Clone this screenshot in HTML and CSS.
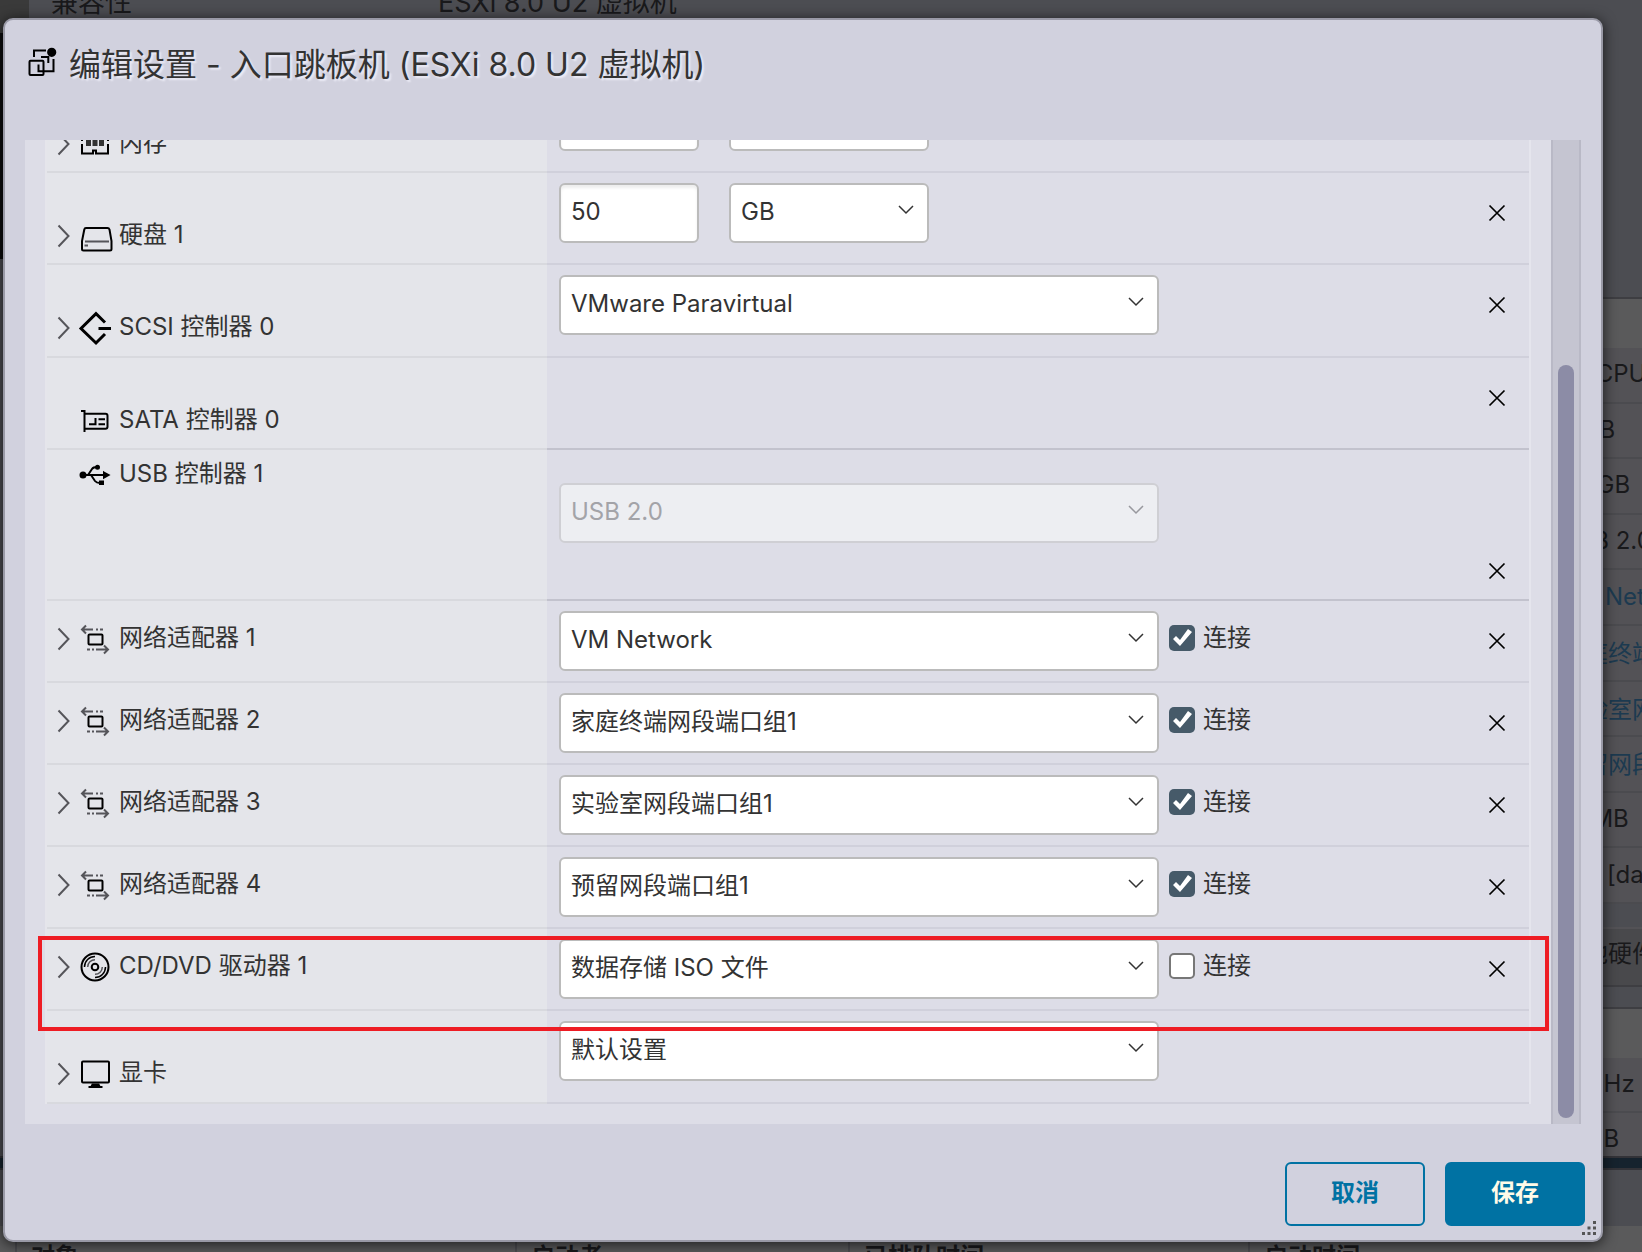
FILE: index.html
```html
<!DOCTYPE html>
<html lang="zh-CN">
<head>
    <meta charset="UTF-8">
    <meta name="viewport" content="width=device-width, initial-scale=1.0">
    <title>编辑设置 - 入口跳板机</title>
    <link rel="stylesheet" href="styles.css">
</head>
<body>
    <!-- Icon sprite -->
    <svg class="sprite" aria-hidden="true">
        <symbol id="i-vm" viewBox="0 0 32 32">
            <rect x="3.5" y="14.7" width="14" height="14.3" rx="1"/>
            <path d="M8 11V4.5h12M15 11h7.3v6M27.5 13v12.3h-15v-6.8"/>
            <circle class="solid" cx="25.7" cy="6.3" r="3.6"/>
        </symbol>
        <symbol id="i-caret" viewBox="0 0 14 24"><path d="M1.5 1.5l10 10.500l-10 10.500"/></symbol>
        <symbol id="i-down" viewBox="0 0 16 10"><path d="M1 1l7 7 7-7"/></symbol>
        <symbol id="i-close" viewBox="0 0 16 16"><path d="M.5.5l15 15M15.500.5l-15 15"/></symbol>
        <symbol id="i-memory" viewBox="0 0 32 32">
            <path d="M3 13V8h26v5M3 16v9.500h11v-3h3v3h12V16"/>
            <path class="chips" d="M9.500 11v7M16 11v7M22.500 11v7"/>
        </symbol>
        <symbol id="i-disk" viewBox="0 0 32 32">
            <path d="M7 8h21.500q1.500 0 2 1.500L32.500 21v8q0 1.500-1.500 1.500H4.500Q3 30.500 3 29v-8L5.300 9.500Q5.600 8 7 8z"/>
            <path class="dim" d="M6 21.500h24M5.500 25.500H9"/>
        </symbol>
        <symbol id="i-scsi" viewBox="0 0 32 32"><path class="thick" d="M26 10.500L17 1.700 2 16.500 17 31l9-9M19.500 16.500H32"/></symbol>
        <symbol id="i-sata" viewBox="0 0 32 32"><path d="M2 6h3.500v21M5.500 8.700h21q2 0 2 2v11q0 2-2 2h-21M10 19.300h6.500V13M19.500 14.200H26M19.500 19.300H26"/></symbol>
        <symbol id="i-usb" viewBox="0 0 32 32">
            <path d="M3 16h23M9 16l4-6q1.300-2 5-2M12 16l4 6q1.500 2 5 2"/>
            <path class="solid" d="M25 13.500l4.500 2.500-4.500 2.500z"/>
            <circle class="solid" cx="4" cy="16" r="2.500"/>
            <circle class="solid" cx="18.500" cy="8.300" r="1.500"/>
            <rect class="solid" x="21" y="22.500" width="3" height="2.500"/>
        </symbol>
        <symbol id="i-net" viewBox="0 0 32 32">
            <path class="dim" d="M3 6.500h11M7 2.500l-4 4 4 4M17 6.500h2M21 6.500h3M8 26.500h3M13 26.500h2M17 26.500h12M25 22.500l4 4-4 4"/>
            <rect x="9.500" y="11.500" width="14" height="10" rx="1"/>
        </symbol>
        <symbol id="i-cd" viewBox="0 0 32 32">
            <circle cx="16" cy="16" r="13.500"/>
            <circle cx="16" cy="16" r="3.300"/>
            <path class="thin" d="M5.500 16A10.500 10.500 0 0 1 16 5.500M26.500 16A10.500 10.500 0 0 1 16 26.500"/>
            <path class="thin dim" d="M8.700 16A7.300 7.300 0 0 1 16 8.700M23.300 16A7.300 7.300 0 0 1 16 23.300"/>
        </symbol>
        <symbol id="i-screen" viewBox="0 0 32 32">
            <rect x="3" y="3.500" width="27" height="21" rx="1"/>
            <path class="solid" d="M13.500 26.500h6l1 2h-8zM9.500 29h14"/>
        </symbol>
    </svg>

    <!-- Page behind the dialog -->
    <div class="host" aria-hidden="true">
        <div class="host-info">
            <span class="host-key">兼容性</span>
            <span>ESXi 8.0 U2 虚拟机</span>
        </div>
        <div class="host-main">
            <div class="host-side">
                <div class="side-head"></div>
                <ul class="side-list">
                    <li>4 vCPU</li>
                    <li>8 GB</li>
                    <li>50 GB</li>
                    <li>USB 2.0</li>
                    <li><a href="#net1">VM Network</a></li>
                    <li><a href="#net2">家庭终端网段端口组1</a></li>
                    <li><a href="#net3">实验室网段端口组1</a></li>
                    <li><a href="#net4">预留网段端口组1</a></li>
                    <li>16 MB</li>
                    <li>ISO [datastore1]</li>
                </ul>
                <div class="side-other">其他硬件</div>
                <div class="side-head side-gap"></div>
                <ul class="side-list side-usage">
                    <li>0 MHz</li>
                    <li>0 MB</li>
                </ul>
            </div>
        </div>
        <div class="host-splitter"></div>
        <div class="host-toolbar"></div>
        <div class="host-tasks">
            <span>对象</span>
            <span>启动者</span>
            <span>已排队时间</span>
            <span>启动时间</span>
        </div>
    </div>

    <div class="overlay">
        <form class="dialog" role="dialog" aria-labelledby="dialog-title">
            <header class="dialog-header">
                <svg class="icon"><use href="#i-vm"/></svg>
                <h1 id="dialog-title">编辑设置 - 入口跳板机 (ESXi 8.0 U2 虚拟机)</h1>
            </header>

            <div class="dialog-body">
                <div class="scroll-content">
                    <div class="hardware">
                        <div class="row tall">
                            <div class="name">
                                <svg class="caret"><use href="#i-caret"/></svg>
                                <svg class="icon"><use href="#i-memory"/></svg>
                                <label for="mem">内存</label>
                            </div>
                            <div class="value">
                                <input class="field size" id="mem" type="text" value="4">
                                <span class="select unit">
                                    <select class="field" aria-label="内存单位"><option>GB</option></select>
                                    <svg class="down"><use href="#i-down"/></svg>
                                </span>
                            </div>
                        </div>

                        <div class="row tall">
                            <div class="name">
                                <svg class="caret"><use href="#i-caret"/></svg>
                                <svg class="icon"><use href="#i-disk"/></svg>
                                <label for="disk">硬盘 1</label>
                            </div>
                            <div class="value">
                                <input class="field size" id="disk" type="text" value="50">
                                <span class="select unit">
                                    <select class="field" aria-label="硬盘单位"><option>GB</option></select>
                                    <svg class="down"><use href="#i-down"/></svg>
                                </span>
                                <button class="remove" type="button" aria-label="移除"><svg><use href="#i-close"/></svg></button>
                            </div>
                        </div>

                        <div class="row tall taller">
                            <div class="name">
                                <svg class="caret"><use href="#i-caret"/></svg>
                                <svg class="icon"><use href="#i-scsi"/></svg>
                                <label for="scsi">SCSI 控制器 0</label>
                            </div>
                            <div class="value">
                                <span class="select">
                                    <select class="field" id="scsi"><option>VMware Paravirtual</option></select>
                                    <svg class="down"><use href="#i-down"/></svg>
                                </span>
                                <button class="remove" type="button" aria-label="移除"><svg><use href="#i-close"/></svg></button>
                            </div>
                        </div>

                        <div class="row tall strong">
                            <div class="name">
                                <span class="caret"></span>
                                <svg class="icon"><use href="#i-sata"/></svg>
                                <span>SATA 控制器 0</span>
                            </div>
                            <div class="value">
                                <button class="remove" type="button" aria-label="移除"><svg><use href="#i-close"/></svg></button>
                            </div>
                        </div>

                        <div class="row usb strong">
                            <div class="name">
                                <span class="caret"></span>
                                <svg class="icon"><use href="#i-usb"/></svg>
                                <label for="usb">USB 控制器 1</label>
                            </div>
                            <div class="value">
                                <span class="select">
                                    <select class="field" id="usb" disabled><option>USB 2.0</option></select>
                                    <svg class="down"><use href="#i-down"/></svg>
                                </span>
                                <button class="remove" type="button" aria-label="移除"><svg><use href="#i-close"/></svg></button>
                            </div>
                        </div>

                        <div class="row">
                            <div class="name">
                                <svg class="caret"><use href="#i-caret"/></svg>
                                <svg class="icon"><use href="#i-net"/></svg>
                                <label for="net1">网络适配器 1</label>
                            </div>
                            <div class="value">
                                <span class="select">
                                    <select class="field" id="net1"><option>VM Network</option></select>
                                    <svg class="down"><use href="#i-down"/></svg>
                                </span>
                                <label class="connect"><input type="checkbox" checked>连接</label>
                                <button class="remove" type="button" aria-label="移除"><svg><use href="#i-close"/></svg></button>
                            </div>
                        </div>

                        <div class="row">
                            <div class="name">
                                <svg class="caret"><use href="#i-caret"/></svg>
                                <svg class="icon"><use href="#i-net"/></svg>
                                <label for="net2">网络适配器 2</label>
                            </div>
                            <div class="value">
                                <span class="select">
                                    <select class="field" id="net2"><option>家庭终端网段端口组1</option></select>
                                    <svg class="down"><use href="#i-down"/></svg>
                                </span>
                                <label class="connect"><input type="checkbox" checked>连接</label>
                                <button class="remove" type="button" aria-label="移除"><svg><use href="#i-close"/></svg></button>
                            </div>
                        </div>

                        <div class="row">
                            <div class="name">
                                <svg class="caret"><use href="#i-caret"/></svg>
                                <svg class="icon"><use href="#i-net"/></svg>
                                <label for="net3">网络适配器 3</label>
                            </div>
                            <div class="value">
                                <span class="select">
                                    <select class="field" id="net3"><option>实验室网段端口组1</option></select>
                                    <svg class="down"><use href="#i-down"/></svg>
                                </span>
                                <label class="connect"><input type="checkbox" checked>连接</label>
                                <button class="remove" type="button" aria-label="移除"><svg><use href="#i-close"/></svg></button>
                            </div>
                        </div>

                        <div class="row">
                            <div class="name">
                                <svg class="caret"><use href="#i-caret"/></svg>
                                <svg class="icon"><use href="#i-net"/></svg>
                                <label for="net4">网络适配器 4</label>
                            </div>
                            <div class="value">
                                <span class="select">
                                    <select class="field" id="net4"><option>预留网段端口组1</option></select>
                                    <svg class="down"><use href="#i-down"/></svg>
                                </span>
                                <label class="connect"><input type="checkbox" checked>连接</label>
                                <button class="remove" type="button" aria-label="移除"><svg><use href="#i-close"/></svg></button>
                            </div>
                        </div>

                        <div class="row marked">
                            <div class="name">
                                <svg class="caret"><use href="#i-caret"/></svg>
                                <svg class="icon"><use href="#i-cd"/></svg>
                                <label for="cd">CD/DVD 驱动器 1</label>
                            </div>
                            <div class="value">
                                <span class="select">
                                    <select class="field" id="cd"><option>数据存储 ISO 文件</option></select>
                                    <svg class="down"><use href="#i-down"/></svg>
                                </span>
                                <label class="connect"><input type="checkbox">连接</label>
                                <button class="remove" type="button" aria-label="移除"><svg><use href="#i-close"/></svg></button>
                            </div>
                        </div>

                        <div class="row tall taller">
                            <div class="name">
                                <svg class="caret"><use href="#i-caret"/></svg>
                                <svg class="icon"><use href="#i-screen"/></svg>
                                <label for="video">显卡</label>
                            </div>
                            <div class="value">
                                <span class="select">
                                    <select class="field" id="video"><option>默认设置</option></select>
                                    <svg class="down"><use href="#i-down"/></svg>
                                </span>
                            </div>
                        </div>
                    </div>
                </div>
                <div class="scrollbar"><div class="thumb"></div></div>
            </div>

            <footer class="dialog-footer">
                <button class="btn" type="button">取消</button>
                <button class="btn primary" type="submit">保存</button>
            </footer>

            <svg class="grip" viewBox="0 0 14 14" aria-hidden="true">
                <path d="M11 0h3v3h-3zM5.500 5.500h3v3h-3zM11 5.500h3v3h-3zM0 11h3v3H0zM5.500 11h3v3h-3zM11 11h3v3h-3z"/>
            </svg>
        </form>
    </div>
</body>
</html>
```
FILE: styles.css
```css
/* Reset and base styles */
* {
    margin: 0;
    padding: 0;
    box-sizing: border-box;
}

body {
    font-family: Inter, "Noto Sans CJK SC", sans-serif;
    font-size: 24px;
    color: #333;
    background: #4a4b50;
    overflow: hidden;
}

ul {
    list-style: none;
}

.sprite {
    display: none;
}

svg {
    fill: none;
    stroke: #000;
    stroke-width: 2;
    overflow: visible;
}

symbol {
    overflow: visible;
}

.solid {
    fill: #000;
}

.dim {
    stroke: #55555a;
}

.thin {
    stroke-width: 1.5;
}

.thick {
    stroke-width: 3;
}

.chips {
    stroke: #333;
    stroke-width: 5;
}

/* Page behind the dialog */
.host {
    position: fixed;
    inset: 0;
    display: flex;
    flex-direction: column;
    overflow: hidden;
    background: #4c4d52;
    color: #19191b;
    white-space: nowrap;
}

.host-info {
    display: flex;
    flex: none;
    height: 60px;
    margin-top: -27px;
    padding-left: 22px;
    border-left: 29px solid #3a3a3a;
    font-size: 27px;
    line-height: 60px;
}

.host-key {
    width: 387px;
}

.host-main {
    display: flex;
    flex: 1;
    min-height: 0;
    justify-content: flex-end;
    background: linear-gradient(to right, #0c0c0e 8px, transparent 8px) no-repeat 0 0 / 100% 226px;
}

.host-side {
    width: 102px;
    margin-top: 264px;
}

.side-head {
    height: 51px;
    background: #5a5a5b;
    border-top: 2px solid #3e3e42;
}

.side-gap {
    margin-top: 20px;
}

.side-list {
    display: grid;
    grid-auto-rows: 1fr;
    height: 556px;
}

.side-list li {
    display: flex;
    align-items: center;
    padding: 0 0 2px 20px;
    background: #535256;
    border-bottom: 2px solid #4b4b4f;
}

.side-list a {
    color: #1c3a50;
    text-decoration: none;
}

.side-usage {
    height: 110px;
}

.side-other {
    height: 60px;
    margin-top: 23px;
    padding-left: 20px;
    line-height: 50px;
    background: #49494c;
    border-top: 2px solid #535256;
    border-bottom: 2px solid #3e3e42;
}

.host-splitter {
    flex: none;
    height: 14px;
    background: #16232e;
    border-top: 2px solid #333338;
    border-bottom: 2px solid #333338;
}

.host-toolbar {
    flex: none;
    height: 56px;
}

.host-tasks {
    display: grid;
    flex: none;
    grid-template-columns: 500fr 333fr 400fr 394fr;
    height: 26px;
    padding-left: 15px;
    overflow: hidden;
    background: #5a5a5b;
    font-weight: bold;
    line-height: 62px;
}

.host-tasks span {
    padding-left: 14px;
    border-left: 2px solid #4b4b4f;
}

/* Dialog */
.overlay {
    position: fixed;
    inset: 0;
    display: flex;
    padding: 18px 39px 10px 3px;
}

.dialog {
    position: relative;
    display: flex;
    flex: 1;
    flex-direction: column;
    min-width: 0;
    background: #d1d1de;
    border: 2px solid #9999a6;
    border-radius: 10px;
    box-shadow: 0 2px 14px rgba(0, 0, 0, 0.7);
}

.dialog-header {
    display: flex;
    flex: none;
    align-items: center;
    gap: 11px;
    height: 120px;
    padding: 0 20px 36px 21px;
}

.dialog-header h1 {
    font-size: 32px;
    font-weight: normal;
    text-shadow: 2px 2px 2px rgba(240, 240, 250, 0.9);
}

.dialog-body {
    display: flex;
    flex: 1;
    min-height: 0;
    margin: 0 20px;
    background: #dddde7;
    overflow: hidden;
}

/* List is scrolled to its end */
.scroll-content {
    display: flex;
    flex: 1;
    flex-direction: column;
    justify-content: flex-end;
    padding: 0 20px;
}

.scrollbar {
    display: flex;
    flex: none;
    align-items: flex-end;
    justify-content: center;
    width: 30px;
    padding-bottom: 6px;
    background: #c5c5d1;
    border: solid #b9b9c6;
    border-width: 0 2px;
}

.thumb {
    width: 16px;
    height: 77%;
    background: #8c8ca6;
    border-radius: 8px;
}

/* Hardware rows */
.hardware {
    flex: none;
    margin-bottom: 20px;
    border-left: 2px solid #e5e5eb;
    border-right: 2px solid #e5e5ed;
}

.row {
    position: relative;
    display: grid;
    grid-template-columns: 500px 1fr;
    min-height: 82px;
}

.row.tall {
    min-height: 92px;
}

.row.taller {
    min-height: 93px;
}

.row.usb {
    min-height: 151px;
}

.name {
    display: flex;
    align-items: flex-start;
    gap: 8px;
    padding: 13px 10px 0;
    line-height: 48px;
    background: #e4e5ea;
    border-bottom: 2px solid #d8d9de;
}

.tall .name {
    padding-top: 38px;
}

.usb .name {
    padding-top: 0;
}

.icon {
    flex: none;
    width: 32px;
    height: 32px;
}

.name .icon {
    margin-top: 9px;
}

.caret {
    flex: none;
    width: 14px;
    height: 24px;
    margin-top: 13px;
    stroke: #55555a;
}

.value {
    display: flex;
    align-items: flex-start;
    gap: 10px;
    padding: 10px 16px 0 12px;
    border-bottom: 2px solid #d0d0db;
}

.strong .value {
    border-bottom-color: #c2c2cd;
}

.usb .value {
    flex-direction: column;
    gap: 0;
    padding-top: 33px;
}

.field {
    display: block;
    width: 100%;
    height: 60px;
    padding: 0 10px 3px;
    font: inherit;
    color: #333;
    background: #fff;
    border: 2px solid #bbb;
    border-radius: 6px;
    appearance: none;
}

.field.size {
    width: 140px;
    margin-right: 20px;
    box-shadow: inset 0 3px 3px #eee;
}

.field:disabled {
    color: #a3a3a8;
    background: #edeef2;
    border-color: #cfcfd4;
    opacity: 1;
}

.select {
    position: relative;
    width: 600px;
}

.select.unit {
    width: 200px;
}

.down {
    position: absolute;
    top: 22px;
    right: 15px;
    width: 16px;
    height: 10px;
    stroke: #333;
    stroke-width: 1.5;
    pointer-events: none;
}

.field:disabled + .down {
    stroke: #98989e;
}

.connect {
    display: flex;
    align-items: flex-start;
    gap: 8px;
    line-height: 54px;
}

.connect input {
    width: 26px;
    height: 26px;
    margin-top: 14px;
    background: #fff;
    border: 2px solid #777;
    border-radius: 5px;
    appearance: none;
}

.connect input:checked {
    background: #465a69;
    border: 0;
}

.connect input:checked::before {
    content: "";
    display: block;
    height: 26px;
    background: #fff;
    clip-path: polygon(4px 14px, 7px 11px, 11px 15px, 19px 4px, 23px 7px, 11px 21px);
}

.remove {
    display: flex;
    align-items: center;
    justify-content: center;
    width: 32px;
    height: 60px;
    margin-left: auto;
    background: none;
    border: 0;
}

.usb .remove {
    height: 56px;
}

.remove svg {
    width: 16px;
    height: 16px;
    stroke-width: 1.7;
}

/* Red frame round the CD drive */
.marked::after {
    content: "";
    position: absolute;
    z-index: 1;
    inset: 7px -20px -20px -9px;
    border: 4px solid #ee1c24;
    pointer-events: none;
}

/* Footer */
.dialog-footer {
    display: flex;
    flex: none;
    justify-content: flex-end;
    gap: 20px;
    padding: 38px 16px 14px;
}

.btn {
    width: 140px;
    height: 64px;
    padding-bottom: 8px;
    font: inherit;
    font-weight: bold;
    color: #0072a3;
    background: none;
    border: 2px solid #0072a3;
    border-radius: 6px;
}

.btn.primary {
    color: #fffbe8;
    background: #0072a3;
}

.grip {
    position: absolute;
    right: 5px;
    bottom: 5px;
    width: 14px;
    height: 14px;
    fill: #555;
    stroke: none;
}
```
